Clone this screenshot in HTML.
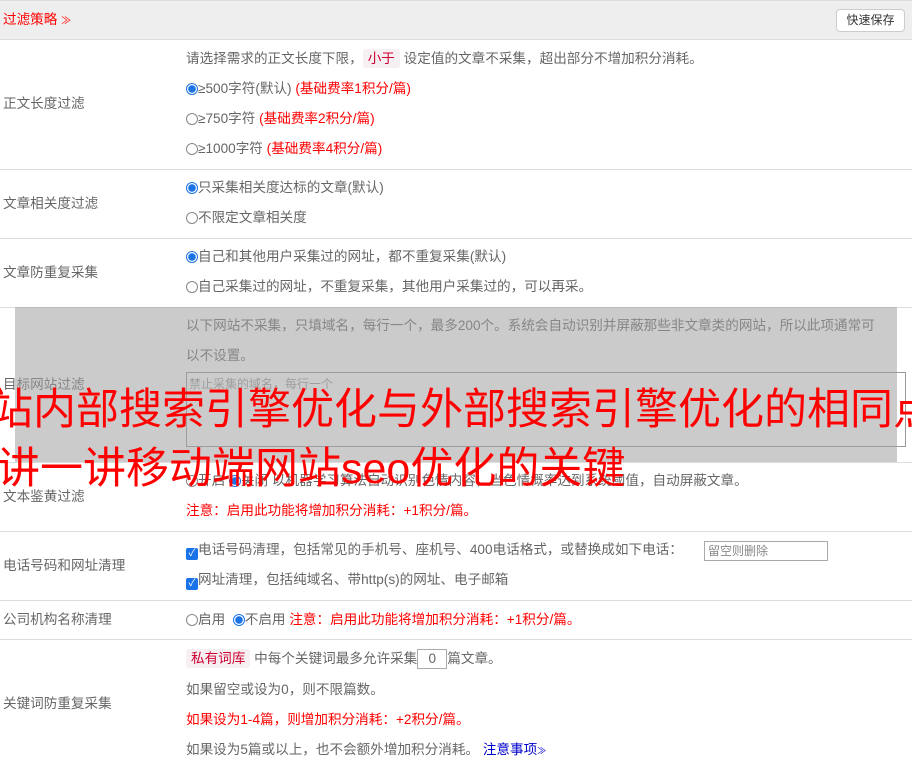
<!DOCTYPE html><html><head><meta charset="utf-8"><style>
body{margin:0;width:912px;height:768px;overflow:hidden;background:#fff;font-family:"Liberation Sans","Noto Sans CJK SC",sans-serif;font-size:13.6px;color:#666;position:relative}
.a{position:absolute;white-space:nowrap;line-height:30px}
.hr{position:absolute;left:0;width:912px;height:1px;background:#ddd}
.r{color:#f00}
.rad{display:inline-block;width:12px;height:12px;border:1px solid #888;border-radius:50%;vertical-align:-2px;box-sizing:border-box;background:#fff}
.rad.on{border:1px solid #1a73e8;background:radial-gradient(circle,#1a73e8 0 3.5px,#fff 4px)}
.cb{display:inline-block;width:12px;height:12px;background:#1a73e8;border-radius:2px;vertical-align:-2px;color:#fff;font-size:10px;line-height:12px;text-align:center}
.tag{background:#f7f0f2;color:#c03;padding:2px 5px;border-radius:3px}
</style></head><body>
<div style="position:absolute;left:0;top:0;width:912px;height:40px;background:#eee;border-top:1px solid #ddd;box-sizing:border-box"></div>
<div class="a r" style="left:3px;top:5px">过滤策略 <span style="font-size:10px">≫</span></div>
<div style="position:absolute;left:836px;top:9px;width:69px;height:23px;border:1px solid #ccc;border-radius:4px;background:#fff;box-sizing:border-box;font-size:12px;color:#333;text-align:center;line-height:21px">快速保存</div>
<div class="hr" style="top:39px"></div>
<div class="a" style="left:3px;top:89px">正文长度过滤</div>
<div class="a" style="left:186px;top:44px">请选择需求的正文长度下限，<span class="tag">小于</span> 设定值的文章不采集，超出部分不增加积分消耗。</div>
<div class="a" style="left:186px;top:74px"><span class="rad on"></span>≥500字符(默认) <span class="r">(基础费率1积分/篇)</span></div>
<div class="a" style="left:186px;top:104px"><span class="rad"></span>≥750字符 <span class="r">(基础费率2积分/篇)</span></div>
<div class="a" style="left:186px;top:134px"><span class="rad"></span>≥1000字符 <span class="r">(基础费率4积分/篇)</span></div>
<div class="hr" style="top:169px"></div>
<div class="a" style="left:3px;top:189px">文章相关度过滤</div>
<div class="a" style="left:186px;top:173px"><span class="rad on"></span>只采集相关度达标的文章(默认)</div>
<div class="a" style="left:186px;top:203px"><span class="rad"></span>不限定文章相关度</div>
<div class="hr" style="top:238px"></div>
<div class="a" style="left:3px;top:258px">文章防重复采集</div>
<div class="a" style="left:186px;top:242px"><span class="rad on"></span>自己和其他用户采集过的网址，都不重复采集(默认)</div>
<div class="a" style="left:186px;top:272px"><span class="rad"></span>自己采集过的网址，不重复采集，其他用户采集过的，可以再采。</div>
<div class="hr" style="top:307px"></div>
<div class="a" style="left:3px;top:370px">目标网站过滤</div>
<div class="a" style="left:186px;top:311px">以下网站不采集，只填域名，每行一个，最多200个。系统会自动识别并屏蔽那些非文章类的网站，所以此项通常可</div>
<div class="a" style="left:186px;top:341px">以不设置。</div>
<div style="position:absolute;left:186px;top:372px;width:720px;height:75px;border:1px solid #999;box-sizing:border-box;font-size:12px;color:#999;padding:2px">禁止采集的域名，每行一个</div>
<div class="hr" style="top:462px"></div>
<div class="a" style="left:3px;top:482px">文本鉴黄过滤</div>
<div class="a" style="left:186px;top:466px"><span class="rad"></span>开启 <span class="rad on"></span>关闭 以机器学习算法自动识别色情内容，当色情概率达到系统阈值，自动屏蔽文章。</div>
<div class="a r" style="left:186px;top:496px">注意：启用此功能将增加积分消耗：+1积分/篇。</div>
<div class="hr" style="top:531px"></div>
<div class="a" style="left:3px;top:551px">电话号码和网址清理</div>
<div class="a" style="left:186px;top:535px"><span class="cb">✓</span>电话号码清理，包括常见的手机号、座机号、400电话格式，或替换成如下电话：</div>
<div style="position:absolute;left:704px;top:541px;width:124px;height:20px;border:1px solid #aaa;box-sizing:border-box;font-size:12px;color:#888;padding-left:3px;line-height:18px">留空则删除</div>
<div class="a" style="left:186px;top:565px"><span class="cb">✓</span>网址清理，包括纯域名、带http(s)的网址、电子邮箱</div>
<div class="hr" style="top:600px"></div>
<div class="a" style="left:3px;top:605px">公司机构名称清理</div>
<div class="a" style="left:186px;top:605px"><span class="rad"></span>启用 &nbsp;<span class="rad on"></span>不启用 <span class="r">注意：启用此功能将增加积分消耗：+1积分/篇。</span></div>
<div class="hr" style="top:639px"></div>
<div class="a" style="left:3px;top:689px">关键词防重复采集</div>
<div class="a" style="left:186px;top:644px"><span class="tag">私有词库</span> 中每个关键词最多允许采集<span style="display:inline-block;width:28px;height:18px;border:1px solid #aaa;text-align:center;line-height:18px;vertical-align:middle">0</span>篇文章。</div>
<div class="a" style="left:186px;top:675px">如果留空或设为0，则不限篇数。</div>
<div class="a r" style="left:186px;top:705px">如果设为1-4篇，则增加积分消耗：+2积分/篇。</div>
<div class="a" style="left:186px;top:735px">如果设为5篇或以上，也不会额外增加积分消耗。 <span style="color:#00c">注意事项<span style="font-size:9px">≫</span></span></div>
<div style="position:absolute;left:15px;top:307px;width:882px;height:155px;background:rgba(160,160,160,0.55)"></div>
<div class="a" style="left:-10px;top:385px;font-size:43px;line-height:50px;color:#f00">站内部搜索引擎优化与外部搜索引擎优化的相同点</div>
<div class="a" style="left:-3px;top:444px;font-size:43px;line-height:50px;color:#f00">讲一讲移动端网站seo优化的关键</div>
</body></html>
